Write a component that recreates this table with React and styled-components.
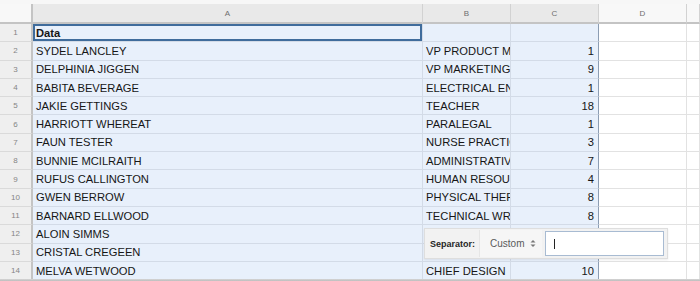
import React from 'react';
import styled, { createGlobalStyle } from 'styled-components';

const GlobalStyle = createGlobalStyle`
    html, body {
        margin: 0;
        padding: 0;
        background: #fff;
        font-family: "Liberation Sans", Arial, sans-serif;
        overflow: hidden;
    }
`;

const ROW_H = 18.3;

// column B is narrow, so only the start of each title fits in the cell
const rows = [
    ['Data', '', ''],
    ['SYDEL LANCLEY', 'VP PRODUCT MA', 1],
    ['DELPHINIA JIGGEN', 'VP MARKETING', 9],
    ['BABITA BEVERAGE', 'ELECTRICAL ENG', 1],
    ['JAKIE GETTINGS', 'TEACHER', 18],
    ['HARRIOTT WHEREAT', 'PARALEGAL', 1],
    ['FAUN TESTER', 'NURSE PRACTIC', 3],
    ['BUNNIE MCILRAITH', 'ADMINISTRATIVE', 7],
    ['RUFUS CALLINGTON', 'HUMAN RESOUR', 4],
    ['GWEN BERROW', 'PHYSICAL THERA', 8],
    ['BARNARD ELLWOOD', 'TECHNICAL WRI', 8],
    ['ALOIN SIMMS', '', ''],
    ['CRISTAL CREGEEN', '', ''],
    ['MELVA WETWOOD', 'CHIEF DESIGN', 10],
];

const Sheet = styled.div`
    position: relative;
    width: 700px;
    height: 281px;
    padding-top: 4px;
    box-sizing: border-box;
    background: #f7f7f7;
    overflow: hidden;
    &::after {
        content: '';
        position: absolute;
        left: 0;
        right: 0;
        bottom: 0;
        height: 2px;
        background: linear-gradient(#d6d6d6, #bcbcbc);
    }
`;

const Grid = styled.div`
    display: grid;
    grid-template-columns: 33px 390px 88px 88px 88px 13px;
    grid-template-rows: 20px repeat(14, ${ROW_H}px);
    background: #fff;
`;

const Corner = styled.div`
    background: #f8f8f8;
    border-right: 2px solid #c4c4c4;
    border-bottom: 2px solid #c4c4c4;
    box-sizing: border-box;
`;

const ColHead = styled.div`
    display: flex;
    align-items: center;
    justify-content: center;
    font-size: 8px;
    color: #6e6e6e;
    background: ${p => (p.$selected ? '#e9e9e9' : '#f8f8f8')};
    border-right: 1px solid #d2d2d2;
    border-bottom: 2px solid #c4c4c4;
    box-sizing: border-box;
`;

const RowHead = styled.div`
    display: flex;
    align-items: center;
    justify-content: center;
    font-size: 8px;
    color: #858585;
    background: #efefef;
    border-right: 2px solid #c4c4c4;
    border-bottom: 1px solid #dadada;
    box-sizing: border-box;
`;

const Cell = styled.div`
    display: flex;
    align-items: center;
    justify-content: ${p => (p.$numeric ? 'flex-end' : 'flex-start')};
    padding: 0 ${p => (p.$numeric ? '4px' : '3px')};
    font-size: 11.2px;
    font-weight: ${p => (p.$bold ? 700 : 400)};
    color: #161616;
    white-space: nowrap;
    overflow: hidden;
    background: ${p => (p.$selected ? '#e8f0fb' : '#fff')};
    border-right: 1px solid ${p => (p.$edge ? '#8c9db3' : p.$selected ? '#d3dbe7' : '#e2e2e2')};
    border-bottom: 1px solid ${p => (p.$selected ? '#d3dbe7' : '#e2e2e2')};
    box-sizing: border-box;
    ${p => p.$active && `
        box-shadow: inset 0 0 0 2px #3f6c9c;
        padding-top: 1px;
    `}
`;

const SeparatorBar = styled.div`
    position: absolute;
    left: 424px;
    top: 228px;
    width: 244px;
    height: 31px;
    display: flex;
    align-items: center;
    background: #f2f2f2;
    border: 1px solid #dedede;
    box-sizing: border-box;
    box-shadow: 0 1px 2px rgba(0, 0, 0, 0.08);
`;

const Label = styled.span`
    font-size: 9px;
    font-weight: 700;
    color: #262626;
    padding: 0 4px 0 5px;
`;

const Select = styled.div`
    display: flex;
    align-items: center;
    justify-content: space-between;
    align-self: stretch;
    width: 63px;
    margin: 1px 0;
    padding: 0 6px 0 10px;
    background: #f6f6f6;
    border-left: 1px solid #e6e6e6;
    box-sizing: border-box;
    font-size: 10px;
    color: #5a5a5a;
`;

const Input = styled.div`
    display: flex;
    align-items: center;
    width: 119px;
    height: 25px;
    margin-left: 3px;
    padding-left: 8px;
    background: #fff;
    border: 1px solid #a8bbd2;
    box-sizing: border-box;
    &::before {
        content: '';
        width: 1px;
        height: 10px;
        background: #222;
    }
`;

const Arrows = () => (
    <svg width="6" height="9" viewBox="0 0 6 9">
        <path d="M0.5 3.5 L3 1 L5.5 3.5 Z" fill="#777" />
        <path d="M0.5 5.5 L3 8 L5.5 5.5 Z" fill="#777" />
    </svg>
);

export default function App() {
    const cols = ['A', 'B', 'C', 'D', ''];
    return (
        <>
            <GlobalStyle />
            <Sheet>
                <Grid>
                    <Corner />
                    {cols.map((c, i) => (
                        <ColHead key={i} $selected={i < 3}>{c}</ColHead>
                    ))}
                    {rows.map(([name, job, n], r) => (
                        <React.Fragment key={r}>
                            <RowHead>{r + 1}</RowHead>
                            <Cell $selected $active={r === 0} $bold={r === 0}>{name}</Cell>
                            <Cell $selected>{job}</Cell>
                            <Cell $selected $numeric $edge>{n}</Cell>
                            <Cell />
                            <Cell />
                        </React.Fragment>
                    ))}
                </Grid>
                <SeparatorBar>
                    <Label>Separator:</Label>
                    <Select>
                        Custom
                        <Arrows />
                    </Select>
                    <Input />
                </SeparatorBar>
            </Sheet>
        </>
    );
}
